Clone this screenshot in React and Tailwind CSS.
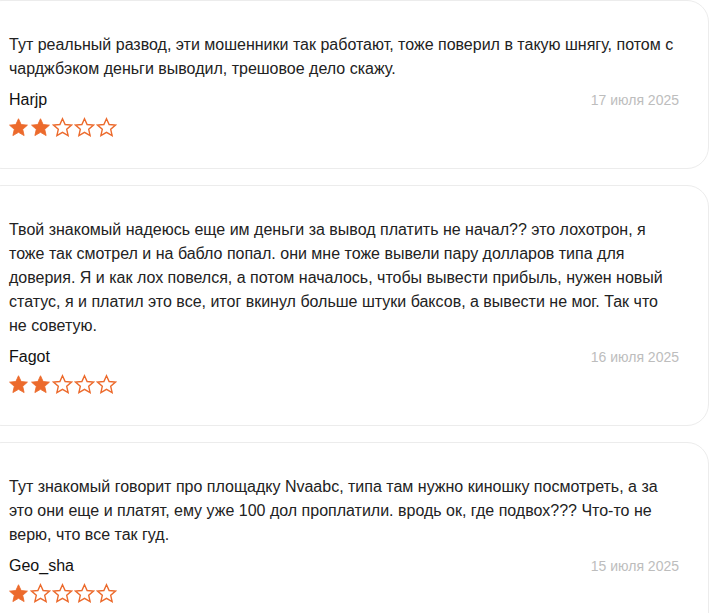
import React from 'react';

const reviews = [
  {
    text: 'Тут реальный развод, эти мошенники так работают, тоже поверил в такую шнягу, потом с чарджбэком деньги выводил, трешовое дело скажу.',
    name: 'Harjp',
    date: '17 июля 2025',
    rating: 2,
  },
  {
    text: 'Твой знакомый надеюсь еще им деньги за вывод платить не начал?? это лохотрон, я тоже так смотрел и на бабло попал. они мне тоже вывели пару долларов типа для доверия. Я и как лох повелся, а потом началось, чтобы вывести прибыль, нужен новый статус, я и платил это все, итог вкинул больше штуки баксов, а вывести не мог. Так что не советую.',
    name: 'Fagot',
    date: '16 июля 2025',
    rating: 2,
  },
  {
    text: 'Тут знакомый говорит про площадку Nvaabc, типа там нужно киношку посмотреть, а за это они еще и платят, ему уже 100 дол проплатили. вродь ок, где подвох??? Что-то не верю, что все так гуд.',
    name: 'Geo_sha',
    date: '15 июля 2025',
    rating: 1,
  },
];

const STAR = 'M12 2l3 6.6 7.2.7-5.4 4.8 1.6 7.1L12 17.5l-6.4 3.7 1.6-7.1L1.8 9.3 9 8.6z';

const Star = ({ filled }) => (
  <svg width="21" height="21" viewBox="0 0 24 24" className="shrink-0">
    <path
      d={STAR}
      fill={filled ? '#ec6a2c' : '#fff'}
      stroke="#ec6a2c"
      strokeWidth={filled ? 1 : 1.6}
    />
  </svg>
);

const ReviewCard = ({ review }) => (
  <div className="border border-[#ececec] rounded-[22px] bg-white pl-[28px] pr-[29px] pt-[32px] pb-[30px]">
    <p className="text-[16px] leading-[24px] text-[#222]">{review.text}</p>
    <div className="flex items-center justify-between mt-[9px]">
      <span className="text-[16px] leading-[20px] text-[#111]">{review.name}</span>
      <span className="text-[14px] leading-[20px] text-[#bdbdbd]">{review.date}</span>
    </div>
    <div className="flex gap-[1px] mt-[7px] -ml-[1px]">
      {[1, 2, 3, 4, 5].map((i) => (
        <Star key={i} filled={i <= review.rating} />
      ))}
    </div>
  </div>
);

export default function App() {
  return (
    <div
      className="w-[709px] h-[613px] overflow-hidden bg-white"
      style={{ fontFamily: '"Liberation Sans", Arial, sans-serif' }}
    >
      <div className="w-[729px] -ml-[20px] flex flex-col gap-4">
        {reviews.map((r) => (
          <ReviewCard key={r.name} review={r} />
        ))}
      </div>
    </div>
  );
}
